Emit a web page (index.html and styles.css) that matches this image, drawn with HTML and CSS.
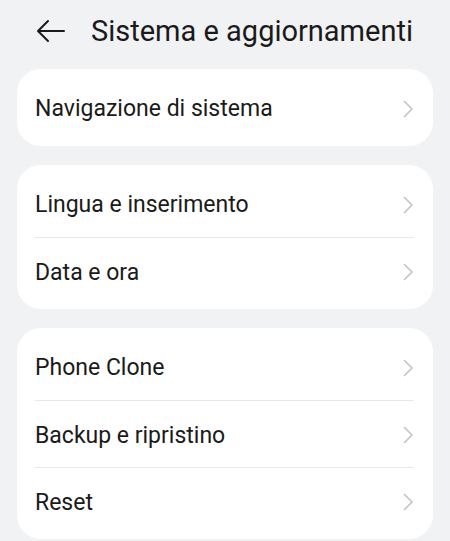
FILE: index.html
```html
<!DOCTYPE html>
<html lang="it">
<head>
    <meta charset="UTF-8">
    <meta name="viewport" content="width=device-width, initial-scale=1.0">
    <title>Sistema e aggiornamenti</title>
    <link rel="stylesheet" href="styles.css">
</head>
<body>
    <header class="topbar">
        <svg class="back" width="30" height="24" viewBox="0 0 30 24">
            <path d="M28 12H3M12 2L2 12l10 10" fill="none" stroke="#1a1a1a" stroke-width="2" stroke-linecap="round" stroke-linejoin="round"/>
        </svg>
        <h1>Sistema e aggiornamenti</h1>
    </header>

    <main class="list">
        <section class="card">
            <a class="row" href="#"><span>Navigazione di sistema</span><svg class="chev" width="11" height="18" viewBox="0 0 11 18"><path d="M1.5 1.5L9 9l-7.5 7.5" fill="none" stroke="#c2c2c2" stroke-width="1.6" stroke-linecap="round" stroke-linejoin="round"/></svg></a>
        </section>

        <section class="card">
            <a class="row" href="#"><span>Lingua e inserimento</span><svg class="chev" width="11" height="18" viewBox="0 0 11 18"><path d="M1.5 1.5L9 9l-7.5 7.5" fill="none" stroke="#c2c2c2" stroke-width="1.6" stroke-linecap="round" stroke-linejoin="round"/></svg></a>
            <a class="row" href="#"><span>Data e ora</span><svg class="chev" width="11" height="18" viewBox="0 0 11 18"><path d="M1.5 1.5L9 9l-7.5 7.5" fill="none" stroke="#c2c2c2" stroke-width="1.6" stroke-linecap="round" stroke-linejoin="round"/></svg></a>
        </section>

        <section class="card">
            <a class="row" href="#"><span>Phone Clone</span><svg class="chev" width="11" height="18" viewBox="0 0 11 18"><path d="M1.5 1.5L9 9l-7.5 7.5" fill="none" stroke="#c2c2c2" stroke-width="1.6" stroke-linecap="round" stroke-linejoin="round"/></svg></a>
            <a class="row" href="#"><span>Backup e ripristino</span><svg class="chev" width="11" height="18" viewBox="0 0 11 18"><path d="M1.5 1.5L9 9l-7.5 7.5" fill="none" stroke="#c2c2c2" stroke-width="1.6" stroke-linecap="round" stroke-linejoin="round"/></svg></a>
            <a class="row" href="#"><span>Reset</span><svg class="chev" width="11" height="18" viewBox="0 0 11 18"><path d="M1.5 1.5L9 9l-7.5 7.5" fill="none" stroke="#c2c2c2" stroke-width="1.6" stroke-linecap="round" stroke-linejoin="round"/></svg></a>
        </section>
    </main>
</body>
</html>
```

FILE: styles.css
```css
body, html {
    margin: 0;
    padding: 0;
    background-color: #f1f2f4;
    font-family: 'Roboto', 'Noto Sans', sans-serif;
    color: #1a1a1a;
}

body {
    padding: 0 17px;
}

/* ヘッダー */
.topbar {
    display: flex;
    align-items: center;
    height: 62px;
    padding-left: 19px;
}

.back {
    display: block;
    margin-right: 25px;
}

.topbar h1 {
    margin: 0;
    font-size: 29px;
    font-weight: 400;
}

/* カード一覧 */
.list {
    display: flex;
    flex-direction: column;
    gap: 19px;
    padding-top: 7px;
}

.card {
    background: #fff;
    border-radius: 24px;
    padding: 5px 19px 5px 18px;
}

.row {
    display: flex;
    align-items: center;
    justify-content: space-between;
    height: 67px;
    padding-top: 2px;
    color: #1a1a1a;
    text-decoration: none;
    font-size: 23px;
    border-top: 1px solid #e8e8e8;
    box-sizing: border-box;
}

.row:first-child {
    border-top: none;
}

.chev {
    display: block;
}
```
